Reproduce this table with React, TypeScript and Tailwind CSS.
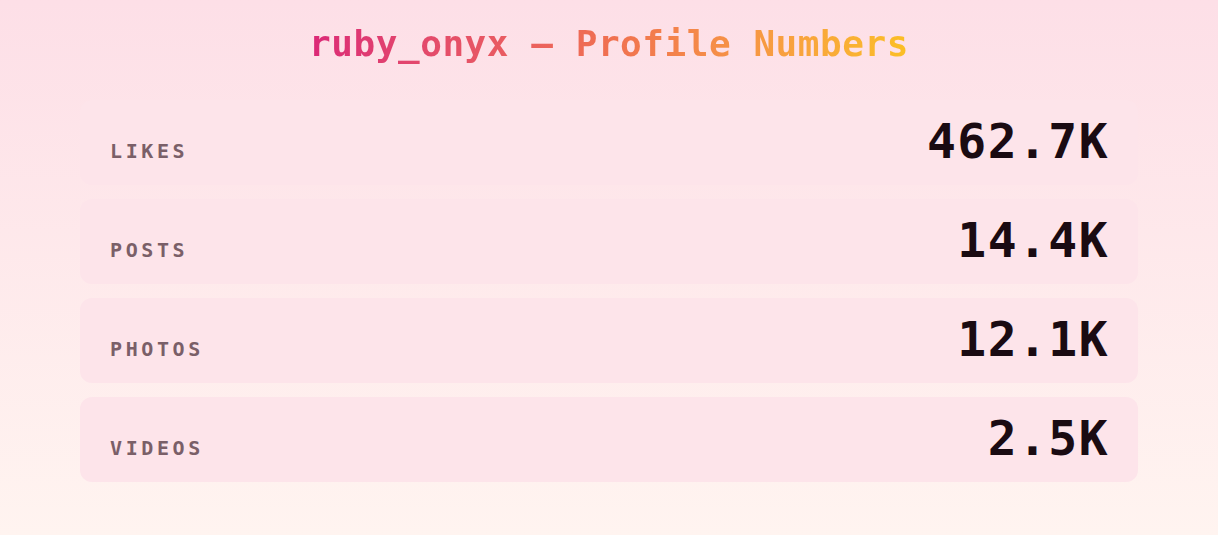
import React from "react";

const stats = [
  { label: "LIKES", value: "462.7K" },
  { label: "POSTS", value: "14.4K" },
  { label: "PHOTOS", value: "12.1K" },
  { label: "VIDEOS", value: "2.5K" },
];

export default function App() {
  return (
    <div
      className="w-[1218px] h-[535px] bg-gradient-to-b from-[#fddfe7] to-[#fff4f0] flex flex-col items-center"
      style={{ fontFamily: '"DejaVu Sans Mono", monospace' }}
    >
      <h1 className="mt-[20px] text-[36px] leading-[48px] font-bold tracking-[0.015em] bg-gradient-to-r from-[#db2777] via-[#f07050] to-[#fbbf24] bg-clip-text text-transparent">
        ruby_onyx — Profile Numbers
      </h1>
      <div className="mt-[32px] w-[1058px] flex flex-col gap-[14px]">
        {stats.map((s) => (
          <div
            key={s.label}
            className="h-[85px] rounded-[12px] bg-[#fde4ea] flex items-baseline justify-between pl-[30px] pr-[29px] pt-[15px]"
          >
            <span className="text-[20px] font-bold tracking-[0.18em] text-[#7a5f68]">{s.label}</span>
            <span className="text-[48px] leading-[52px] font-bold tracking-[0.03em] text-[#1a0b12]">{s.value}</span>
          </div>
        ))}
      </div>
    </div>
  );
}
